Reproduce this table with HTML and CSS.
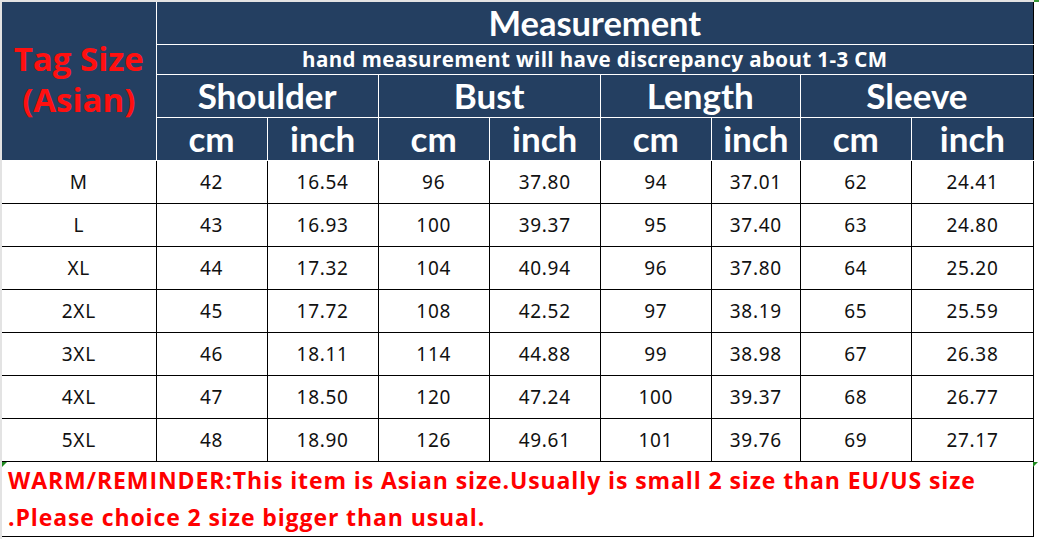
FILE: index.html
```html
<!DOCTYPE html>
<html lang="en">
<head>
<meta charset="utf-8">
<title>Size chart</title>
<link rel="stylesheet" href="styles.css">
</head>
<body>
<div class="sheet">
  <table class="chart">
    <colgroup>
      <col class="c-tag">
      <col class="c-std"><col class="c-std">
      <col class="c-std"><col class="c-std">
      <col class="c-std"><col class="c-narrow">
      <col class="c-std"><col class="c-wide">
    </colgroup>
    <thead>
      <tr class="r-title">
        <th class="tag" rowspan="4"><span>Tag Size<br>(Asian)</span></th>
        <th class="title" colspan="8">Measurement</th>
      </tr>
      <tr class="r-sub">
        <th class="sub" colspan="8">hand measurement will have discrepancy about 1-3 CM</th>
      </tr>
      <tr class="r-group">
        <th class="group" colspan="2">Shoulder</th>
        <th class="group" colspan="2">Bust</th>
        <th class="group" colspan="2">Length</th>
        <th class="group last" colspan="2">Sleeve</th>
      </tr>
      <tr class="r-unit">
        <th class="unit">cm</th><th class="unit">inch</th>
        <th class="unit">cm</th><th class="unit">inch</th>
        <th class="unit">cm</th><th class="unit">inch</th>
        <th class="unit">cm</th><th class="unit last">inch</th>
      </tr>
    </thead>
    <tbody>
      <tr><td class="size">M</td><td>42</td><td>16.54</td><td>96</td><td>37.80</td><td>94</td><td>37.01</td><td>62</td><td class="last">24.41</td></tr>
      <tr><td class="size">L</td><td>43</td><td>16.93</td><td>100</td><td>39.37</td><td>95</td><td>37.40</td><td>63</td><td class="last">24.80</td></tr>
      <tr><td class="size">XL</td><td>44</td><td>17.32</td><td>104</td><td>40.94</td><td>96</td><td>37.80</td><td>64</td><td class="last">25.20</td></tr>
      <tr><td class="size">2XL</td><td>45</td><td>17.72</td><td>108</td><td>42.52</td><td>97</td><td>38.19</td><td>65</td><td class="last">25.59</td></tr>
      <tr><td class="size">3XL</td><td>46</td><td>18.11</td><td>114</td><td>44.88</td><td>99</td><td>38.98</td><td>67</td><td class="last">26.38</td></tr>
      <tr><td class="size">4XL</td><td>47</td><td>18.50</td><td>120</td><td>47.24</td><td>100</td><td>39.37</td><td>68</td><td class="last">26.77</td></tr>
      <tr><td class="size">5XL</td><td>48</td><td>18.90</td><td>126</td><td>49.61</td><td>101</td><td>39.76</td><td>69</td><td class="last">27.17</td></tr>
      <tr class="r-warn">
        <td class="warn" colspan="9">
          <span class="mark mark-l"></span><span class="mark mark-r"></span>
          WARM/REMINDER:This item is Asian size.Usually is small 2 size than EU/US size<br>.Please choice 2 size bigger than usual.
        </td>
      </tr>
    </tbody>
  </table>
  <span class="mark-top"></span>
</div>
</body>
</html>
```
FILE: styles.css
```css
* { box-sizing: border-box; }
html, body { margin: 0; padding: 0; background: #fff; }
body { width: 1039px; height: 539px; overflow: hidden; }

.sheet {
  position: relative;
  width: 1039px;
  height: 539px;
  padding: 2px 0 0 2px;
  background:
    linear-gradient(#e3e3e3, #e3e3e3) top left / 100% 2px no-repeat,
    linear-gradient(#e3e3e3, #e3e3e3) top left / 2px 100% no-repeat,
    #fff;
}

.chart {
  border-collapse: collapse;
  table-layout: fixed;
  width: 1032px;
}
.c-tag { width: 154px; }
.c-std { width: 111px; }
.c-narrow { width: 89px; }
.c-wide { width: 122px; }

.chart th {
  background: #243f61;
  color: #fff;
  font-family: Lato, "Open Sans", sans-serif;
  font-weight: 700;
  padding: 0;
  text-align: center;
  border: 1px solid #fff;
  line-height: 1;
}
.chart thead tr:first-child th { border-top: 0; }
.chart th.tag { border-left: 0; }
.chart th.title, .chart th.sub, .chart th.last { border-right: 1px solid #000; }

.r-title { height: 42px; }
.r-sub { height: 30px; }
.r-group { height: 43px; }
.r-unit { height: 43px; }

.tag span {
  display: inline-block;
  color: #ff1010;
  font-family: "Open Sans", sans-serif;
  font-size: 33px;
  line-height: 41px;
  padding-bottom: 3px;
}
.title { font-size: 34.5px; padding-top: 1px !important; }
.sub { font-family: "Open Sans", sans-serif !important; font-size: 20.5px; letter-spacing: 0.4px; }
.group { font-size: 35px; }
.unit { font-size: 35px; }

.chart td {
  font-family: "Noto Sans", "Open Sans", sans-serif;
  font-size: 19px;
  letter-spacing: 0.7px;
  color: #111;
  text-align: center;
  height: 43px;
  padding: 0;
  border: 1px solid #000;
}
.chart td.size { border-left: 0; }

.r-warn td.warn {
  position: relative;
  height: 74px;
  text-align: left;
  vertical-align: top;
  font-family: "Open Sans", sans-serif;
  font-weight: 700;
  font-size: 23px;
  letter-spacing: 0.9px;
  line-height: 37px;
  color: #ff0000;
  padding: 0 0 0 6px;
  border-left: 0;
}

.mark {
  position: absolute;
  top: 0;
  width: 0;
  height: 0;
  border-top: 5px solid #1f8a1f;
  border-right: 5px solid transparent;
}
.mark-l { left: 0; }
.mark-r { right: -5px; }
.mark-top {
  position: absolute;
  top: 0;
  left: 1034px;
  width: 5px;
  height: 2px;
  background: #3a9a3a;
}
```
